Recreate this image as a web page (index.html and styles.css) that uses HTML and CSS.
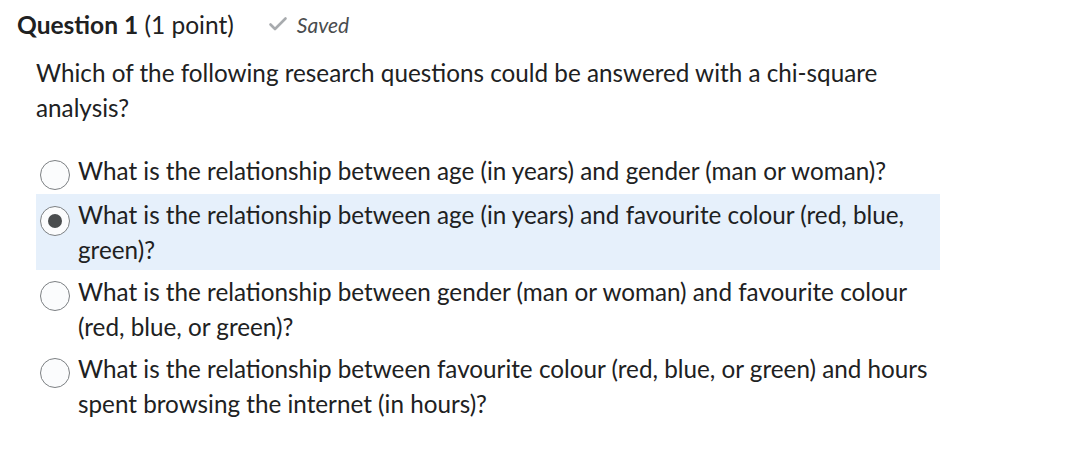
FILE: index.html
```html
<!DOCTYPE html>
<html lang="en">
<head>
<meta charset="utf-8">
<link rel="stylesheet" href="styles.css">
</head>
<body>
<div class="question">
  <div class="q-header">
    <h2 class="q-title"><strong>Question 1</strong> <span class="q-points">(1 point)</span></h2>
    <span class="q-status">
      <svg class="check" width="20" height="16" viewBox="0 0 20 16" aria-hidden="true"><path d="M2.5 8.5 L7 13 L17.5 2.5" fill="none" stroke="#a8abae" stroke-width="2.6" stroke-linecap="round" stroke-linejoin="round"/></svg>
      <em>Saved</em>
    </span>
  </div>
  <div class="q-body">
    <p class="q-text">Which of the following research questions could be answered with a chi-square analysis?</p>
    <div class="options">
      <label class="option">
        <span class="radio"></span>
        <span class="opt-text">What is the relationship between age (in years) and gender (man or woman)?</span>
      </label>
      <label class="option selected">
        <span class="radio checked"></span>
        <span class="opt-text">What is the relationship between age (in years) and favourite colour (red, blue, green)?</span>
      </label>
      <label class="option">
        <span class="radio"></span>
        <span class="opt-text">What is the relationship between gender (man or woman) and favourite colour (red, blue, or green)?</span>
      </label>
      <label class="option">
        <span class="radio"></span>
        <span class="opt-text">What is the relationship between favourite colour (red, blue, or green) and hours spent browsing the internet (in hours)?</span>
      </label>
    </div>
  </div>
</div>
</body>
</html>
```
FILE: styles.css
```css
html, body {
  margin: 0;
  padding: 0;
  background: #ffffff;
}
body {
  font-family: Lato, "Noto Sans", sans-serif;
  color: #202122;
}
.question {
  padding: 9px 0 0 17px;
}
.q-header {
  display: flex;
  align-items: center;
  gap: 34px;
  height: 30px;
}
.q-title {
  margin: 0;
  font-size: 24.5px;
  font-weight: 400;
  color: #202122;
}
.q-title strong {
  font-weight: 700;
}
.q-status {
  display: flex;
  align-items: center;
  gap: 9px;
  font-size: 21px;
  color: #494c4e;
}
.q-status em {
  font-style: italic;
}
.q-body {
  padding-left: 19px;
  width: 904px;
}
.q-text {
  margin: 16px 0 0 0;
  font-size: 24.25px;
  line-height: 35px;
}
.options {
  margin-top: 25px;
  display: flex;
  flex-direction: column;
  gap: 1px;
}
.option {
  display: flex;
  align-items: flex-start;
  gap: 8px;
  padding: 3px 0 3px 4px;
  font-size: 24.25px;
  line-height: 35px;
}
.option.selected {
  background: #e6f0fb;
}
.radio {
  flex: none;
  box-sizing: border-box;
  width: 30px;
  height: 30px;
  margin-top: 7px;
  border: 1.5px solid #7c8083;
  border-radius: 50%;
  background: #fbfcfd;
  display: flex;
  align-items: center;
  justify-content: center;
}
.radio.checked {
  margin-top: 9px;
}
.radio.checked::after {
  content: "";
  width: 14px;
  height: 14px;
  border-radius: 50%;
  background: #494c4e;
}
.opt-text {
  flex: 1;
}
```
